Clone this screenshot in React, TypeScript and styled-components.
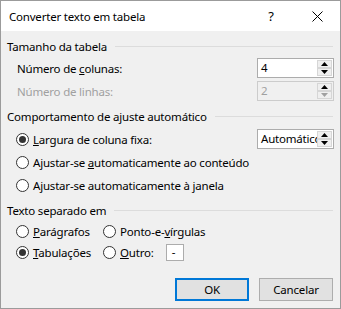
import React from "react";
import styled, { createGlobalStyle } from "styled-components";

const GlobalStyle = createGlobalStyle`
  body {
    margin: 0;
    background: #ffffff;
  }
  * {
    box-sizing: border-box;
  }
`;

const Window = styled.div`
  width: 341px;
  height: 309px;
  border: 1px solid #9b9b9b;
  background: #f0f0f0;
  font-family: "Noto Sans", "Liberation Sans", sans-serif;
  font-size: 11.5px;
  letter-spacing: -0.2px;
  color: #000;
  display: flex;
  flex-direction: column;
`;

const TitleBar = styled.div`
  height: 30px;
  background: #ffffff;
  display: flex;
  align-items: center;
  padding-left: 8px;
`;

const TitleText = styled.div`
  flex: 1;
`;

const TitleButton = styled.div<{ width: number }>`
  width: ${(p) => p.width}px;
  height: 30px;
  display: flex;
  align-items: center;
  justify-content: center;
  font-size: 13px;
`;

const Body = styled.div`
  flex: 1;
  padding: 7px 6px 0 6px;
  display: flex;
  flex-direction: column;
`;

const Group = styled.div<{ top: number }>`
  margin-top: ${(p) => p.top}px;
  display: flex;
  flex-direction: column;
`;

const GroupHeader = styled.div`
  height: 16px;
  display: flex;
  align-items: center;
  gap: 8px;
  padding-right: 1px;
`;

const GroupLine = styled.div`
  flex: 1;
  height: 1px;
  background: #dcdcdc;
`;

const GroupBody = styled.div<{ top: number; gap: number }>`
  margin-top: ${(p) => p.top}px;
  padding-left: 9px;
  display: flex;
  flex-direction: column;
  gap: ${(p) => p.gap}px;
`;

const Row = styled.div`
  height: 20px;
  display: flex;
  align-items: center;
`;

const FieldLabel = styled.div<{ disabled?: boolean }>`
  flex: 1;
  padding-left: 1px;
  color: ${(p) => (p.disabled ? "#a0a0a0" : "#000")};
`;

const SpinBox = styled.div<{ disabled?: boolean }>`
  width: 77px;
  height: 20px;
  border: 1px solid ${(p) => (p.disabled ? "#cccccc" : "#acacac")};
  background: ${(p) => (p.disabled ? "#f0f0f0" : "#ffffff")};
  display: flex;
  align-items: stretch;
`;

const SpinValue = styled.div<{ disabled?: boolean }>`
  flex: 1;
  overflow: hidden;
  white-space: nowrap;
  padding-left: 3px;
  line-height: 18px;
  color: ${(p) => (p.disabled ? "#a0a0a0" : "#000")};
`;

const SpinButtons = styled.div`
  width: 16px;
  padding: 1px 1px 1px 0;
  display: flex;
  flex-direction: column;
`;

const SpinButton = styled.div`
  flex: 1;
  border: 1px solid #d6d6d6;
  background: #efefef;
  display: flex;
  align-items: center;
  justify-content: center;
`;

const RadioRow = styled.label`
  display: flex;
  align-items: center;
  height: 20px;
`;

const RadioCircle = styled.span<{ checked?: boolean }>`
  width: 13px;
  height: 13px;
  border-radius: 50%;
  border: 1px solid #333333;
  background: #ffffff;
  display: flex;
  align-items: center;
  justify-content: center;
  margin-right: 4px;
  flex-shrink: 0;

  &::after {
    content: "";
    display: ${(p) => (p.checked ? "block" : "none")};
    width: 7px;
    height: 7px;
    border-radius: 50%;
    background: #333333;
  }
`;

const RadioCell = styled.div<{ width?: number }>`
  width: ${(p) => (p.width ? `${p.width}px` : "auto")};
  display: flex;
  align-items: center;
`;

const Spacer = styled.div`
  flex: 1;
`;

const SmallInput = styled.div`
  width: 18px;
  height: 17px;
  margin-left: 12px;
  border: 1px solid #acacac;
  background: #ffffff;
  line-height: 14px;
  padding-left: 5px;
`;

const Footer = styled.div`
  margin-top: 16px;
  display: flex;
  justify-content: flex-end;
  gap: 10px;
  padding-right: 1px;
`;

const Button = styled.div<{ primary?: boolean }>`
  width: 74px;
  height: 23px;
  background: #e1e1e1;
  border: ${(p) => (p.primary ? "2px solid #0078d7" : "1px solid #adadad")};
  display: flex;
  align-items: center;
  justify-content: center;
`;

const Arrow = ({ up, disabled }: { up?: boolean; disabled?: boolean }) => (
  <svg width="7" height="4" viewBox="0 0 7 4">
    <path
      d={up ? "M0 4 L3.5 0 L7 4 Z" : "M0 0 L7 0 L3.5 4 Z"}
      fill={disabled ? "#a0a0a0" : "#000"}
    />
  </svg>
);

const Spin = ({ value, disabled }: { value: string; disabled?: boolean }) => (
  <SpinBox disabled={disabled}>
    <SpinValue disabled={disabled}>{value}</SpinValue>
    <SpinButtons>
      <SpinButton>
        <Arrow up />
      </SpinButton>
      <SpinButton>
        <Arrow disabled={disabled} />
      </SpinButton>
    </SpinButtons>
  </SpinBox>
);

const Radio = ({ checked, children }: { checked?: boolean; children: React.ReactNode }) => (
  <RadioRow>
    <RadioCircle checked={checked} />
    <span>{children}</span>
  </RadioRow>
);

const App: React.FC = () => {
  return (
    <>
      <GlobalStyle />
      <Window>
        <TitleBar>
          <TitleText>Converter texto em tabela</TitleText>
          <TitleButton width={46}>?</TitleButton>
          <TitleButton width={46}>
            <svg width="11" height="11" viewBox="0 0 11 11">
              <path d="M0.5 0.5 L10.5 10.5 M10.5 0.5 L0.5 10.5" stroke="#000" strokeWidth="1" />
            </svg>
          </TitleButton>
        </TitleBar>
        <Body>
          <Group top={0}>
            <GroupHeader>
              Tamanho da tabela
              <GroupLine />
            </GroupHeader>
            <GroupBody top={4} gap={3}>
              <Row>
                <FieldLabel>
                  Número de <u>c</u>olunas:
                </FieldLabel>
                <Spin value="4" />
              </Row>
              <Row>
                <FieldLabel disabled>Número de linhas:</FieldLabel>
                <Spin value="2" disabled />
              </Row>
            </GroupBody>
          </Group>

          <Group top={7}>
            <GroupHeader>
              Comportamento de ajuste automático
              <GroupLine />
            </GroupHeader>
            <GroupBody top={5} gap={3}>
              <Row>
                <Radio checked>
                  <u>L</u>argura de coluna fixa:
                </Radio>
                <Spacer />
                <Spin value="Automático" />
              </Row>
              <Radio>
                Ajustar-se <u>a</u>utomaticamente ao conteúdo
              </Radio>
              <Radio>
                Ajustar-se automaticamente à <u>j</u>anela
              </Radio>
            </GroupBody>
          </Group>

          <Group top={7}>
            <GroupHeader>
              Texto separado em
              <GroupLine />
            </GroupHeader>
            <GroupBody top={3} gap={1}>
              <Row>
                <RadioCell width={87}>
                  <Radio>
                    <u>P</u>arágrafos
                  </Radio>
                </RadioCell>
                <RadioCell>
                  <Radio>
                    Ponto-e-<u>v</u>írgulas
                  </Radio>
                </RadioCell>
              </Row>
              <Row>
                <RadioCell width={87}>
                  <Radio checked>
                    <u>T</u>abulações
                  </Radio>
                </RadioCell>
                <RadioCell>
                  <Radio>
                    <u>O</u>utro:
                  </Radio>
                  <SmallInput>-</SmallInput>
                </RadioCell>
              </Row>
            </GroupBody>
          </Group>

          <Footer>
            <Button primary>OK</Button>
            <Button>Cancelar</Button>
          </Footer>
        </Body>
      </Window>
    </>
  );
};

export default App;
